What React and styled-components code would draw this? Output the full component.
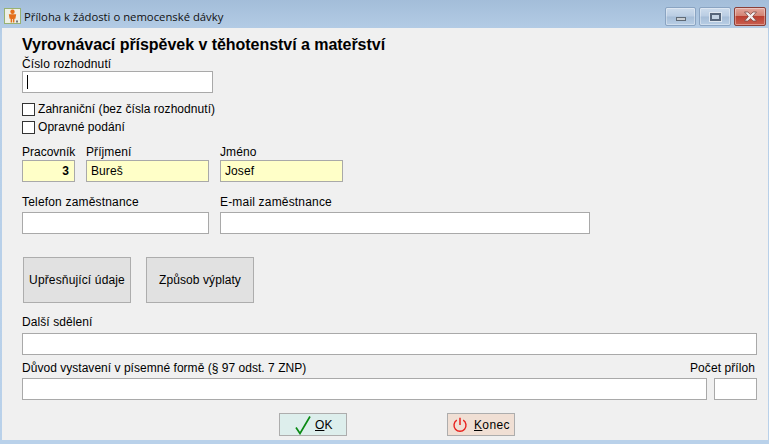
import React from "react";
import styled, { createGlobalStyle } from "styled-components";

const Global = createGlobalStyle`
  html, body { margin: 0; padding: 0; background: #b9d1ea; }
  body { font-family: "Liberation Sans", Arial, sans-serif; font-size: 12px; color: #000; overflow: hidden; }
`;

const Win = styled.div`
  width: 769px; height: 444px; display: flex; flex-direction: column; box-sizing: border-box;
  background: linear-gradient(180deg, #a3bdd9 0%, #b7cfe8 8%, #b9d1ea 100%);
`;
const TitleBar = styled.div`
  height: 28px; flex: none; display: flex; align-items: flex-start; box-sizing: border-box; padding: 7px 3px 0 4px;
`;
const AppIcon = styled.svg`width: 17px; height: 16px; margin-top: 1px; flex: none;`;
const Title = styled.div`
  margin-left: 3px; margin-top: 3px; font: 11.3px/14px "Open Sans", sans-serif; color: #111; flex: 1;
`;
const Caption = styled.div`display: flex; gap: 3px;`;
const CapBtn = styled.div`
  width: ${p => p.$w}px; height: 19px; box-sizing: border-box; border: 1px solid ${p => p.$close ? "#8a4038" : "#8aa4c2"};
  border-radius: 2px; display: flex; align-items: center; justify-content: center;
  background: ${p => p.$close
    ? "linear-gradient(180deg,#e2a89e 0%,#d38474 45%,#bb3f30 50%,#c95f50 100%)"
    : "linear-gradient(180deg,#cddcec 0%,#bacde3 48%,#a6bdd7 52%,#b8cee5 100%)"};
  box-shadow: inset 0 0 0 1px rgba(255,255,255,.35);
`;
const MinGlyph = styled.div`
  width: 10px; height: 4px; margin-top: 5px; box-sizing: border-box; background: #c9ced3; border: 1px solid #5f6a76;
`;
const MaxGlyph = styled.div`
  width: 11px; height: 8px; box-sizing: border-box; border: 2px solid #55657a; background: #c3d3e4;
  outline: 1px solid #dfe7f0;
`;
const Client = styled.div`
  flex: none; height: 412px; margin: 0 1px 4px 2px; background: #f0f0f0; box-sizing: border-box; padding: 8px 10px 0 20px;
  display: flex; flex-direction: column; position: relative;
`;
const Heading = styled.h1`
  margin: 0; font: bold 16px/18px "Liberation Sans", sans-serif; letter-spacing: -0.04px; color: #000;
`;
const Label = styled.div`
  display: flex; justify-content: ${p => p.$right ? "flex-end" : "flex-start"};
  font-size: 12px; line-height: 14px; letter-spacing: ${p => p.$track ?? 0.08}px; white-space: nowrap; color: #000;
  margin-right: ${p => p.$right ? "2px" : 0};
`;
const Field = styled.div`
  width: ${p => p.$w}px; height: 22px; box-sizing: border-box;
  border: 1px solid #a9a9a9;
  background: ${p => p.$yellow ? "#ffffc8" : "#fff"}; margin-top: ${p => p.$gap || 0}px;
  padding: 0 ${p => p.$right ? "5px" : "4px"}; line-height: 21px; letter-spacing: 0.08px;
  text-align: ${p => p.$right ? "right" : "left"}; font-weight: ${p => p.$bold ? "bold" : "normal"};
`;
const Caret = styled.div`width: 1px; height: 14px; background: #000; margin-top: 3px;`;
const Block = styled.div`margin-top: ${p => p.$mt || 0}px;`;
const Row = styled.div`display: flex; margin-top: ${p => p.$mt || 0}px;`;
const Col = styled.div`width: ${p => p.$w}px; flex: none; min-width: 0;`;
const CheckRow = styled.label`
  display: flex; align-items: center; height: 14px; letter-spacing: 0.05px; margin-top: ${p => p.$mt || 0}px;
`;
const Box = styled.span`
  width: 13px; height: 13px; box-sizing: border-box; border: 1px solid #333; background: #fff; margin-right: 3px; flex: none;
`;
const ActionRow = styled.div`display: flex; gap: 15px; margin-top: 23px; margin-left: 1px;`;
const ActionBtn = styled.div`
  width: 108px; height: 46px; box-sizing: border-box; border: 1px solid #adadad; background: #e1e1e1;
  display: flex; align-items: center; justify-content: center; font-size: 12px; letter-spacing: ${p => p.$track ?? 0.08}px;
`;
const Footer = styled.div`display: flex; margin-top: 13px; padding-left: 257px;`;
const FootBtn = styled.div`
  width: 68px; height: 23px; box-sizing: border-box; border: 1px solid #adadad; letter-spacing: ${p => p.$track ?? 0.08}px;
  background: ${p => p.$bg}; margin-right: ${p => p.$mr || 0}px;
  display: flex; align-items: center; padding-left: ${p => p.$pl || 0}px;
`;
const U = styled.span`text-decoration: underline;`;
const CheckIcon = styled.svg`width: 16px; height: 20px; margin-right: 4px; flex: none;`;
const PowerIcon = styled.svg`width: 16px; height: 16px; margin-right: 6px; flex: none;`;

export default function App() {
  return (
    <Win>
      <Global />
      <TitleBar>
        <AppIcon viewBox="0 0 17 16">
          <rect x="0.5" y="0.5" width="16" height="15" fill="#eef0e6" stroke="#98b272" />
          <circle cx="8.5" cy="3.8" r="2.2" fill="#e4701a" />
          <path d="M4.800 6.200h7.400l-.8 4.600h-1V14.500H8.900V11H8.100V14.500H6.600V10.800h-1z" fill="#e4701a" />
          <path d="M12 12.500h2v2h-2z" fill="#777" />
        </AppIcon>
        <Title>Příloha k žádosti o nemocenské dávky</Title>
        <Caption>
          <CapBtn $w={31}><MinGlyph /></CapBtn>
          <CapBtn $w={32}><MaxGlyph /></CapBtn>
          <CapBtn $w={32} $close>
            <svg width="15" height="11" viewBox="0 0 15 11">
              <path d="M1.500 1h3.400l2.600 2.500L10.100 1h3.400L9.700 5.500l3.800 4.500h-3.400L7.500 7.500 4.900 10H1.500l3.800-4.500z" fill="#f3eeee" stroke="#7a4a44" strokeWidth="0.8" />
            </svg>
          </CapBtn>
        </Caption>
      </TitleBar>
      <Client>
        <Heading>Vyrovnávací příspěvek v těhotenství a mateřství</Heading>
        <Block $mt={3}>
          <Label $track={0.12}>Číslo rozhodnutí</Label>
          <Field $w={191}><Caret /></Field>
        </Block>
        <CheckRow $mt={9}><Box />Zahraniční (bez čísla rozhodnutí)</CheckRow>
        <CheckRow $mt={4}><Box />Opravné podání</CheckRow>
        <Row $mt={11}>
          <Col $w={64}>
            <Label $track={0}>Pracovník</Label>
            <Field $w={53} $gap={1} $yellow $right $bold>3</Field>
          </Col>
          <Col $w={134}>
            <Label>Příjmení</Label>
            <Field $w={123} $gap={1} $yellow>Bureš</Field>
          </Col>
          <Col $w={123}>
            <Label>Jméno</Label>
            <Field $w={123} $gap={1} $yellow>Josef</Field>
          </Col>
        </Row>
        <Row $mt={13}>
          <Col $w={198}>
            <Label $track={0.18}>Telefon zaměstnance</Label>
            <Field $w={187} $gap={3} />
          </Col>
          <Col $w={370}>
            <Label $track={0.18}>E-mail zaměstnance</Label>
            <Field $w={370} $gap={3} />
          </Col>
        </Row>
        <ActionRow>
          <ActionBtn $track={0.14}>Upřesňující údaje</ActionBtn>
          <ActionBtn>Způsob výplaty</ActionBtn>
        </ActionRow>
        <Block $mt={12}>
          <Label>Další sdělení</Label>
          <Field $w={735} $gap={4} />
        </Block>
        <Row $mt={6}>
          <Col $w={692}>
            <Label $track={0.03}>Důvod vystavení v písemné formě (§ 97 odst. 7 ZNP)</Label>
            <Field $w={685} $gap={3} />
          </Col>
          <Col $w={43}>
            <Label $right>Počet příloh</Label>
            <Field $w={43} $gap={3} />
          </Col>
        </Row>
        <Footer>
          <FootBtn $bg="#ddeeec" $mr={100} $pl={15}>
            <CheckIcon viewBox="0 0 16 20">
              <path d="M1 12.500 L5 18.500 L15 1.500" fill="none" stroke="#0a8a14" strokeWidth="1.700" />
            </CheckIcon>
            <U>O</U>K
          </FootBtn>
          <FootBtn $bg="#f0dfd4" $pl={4} $track={0.35}>
            <PowerIcon viewBox="0 0 16 16">
              <path d="M4.800 3.200A6 6 0 1 0 11.200 3.200" fill="none" stroke="#e8201c" strokeWidth="1.400" />
              <path d="M8 0.800V8" fill="none" stroke="#e8201c" strokeWidth="1.500" />
            </PowerIcon>
            <U>K</U>onec
          </FootBtn>
        </Footer>
      </Client>
    </Win>
  );
}
